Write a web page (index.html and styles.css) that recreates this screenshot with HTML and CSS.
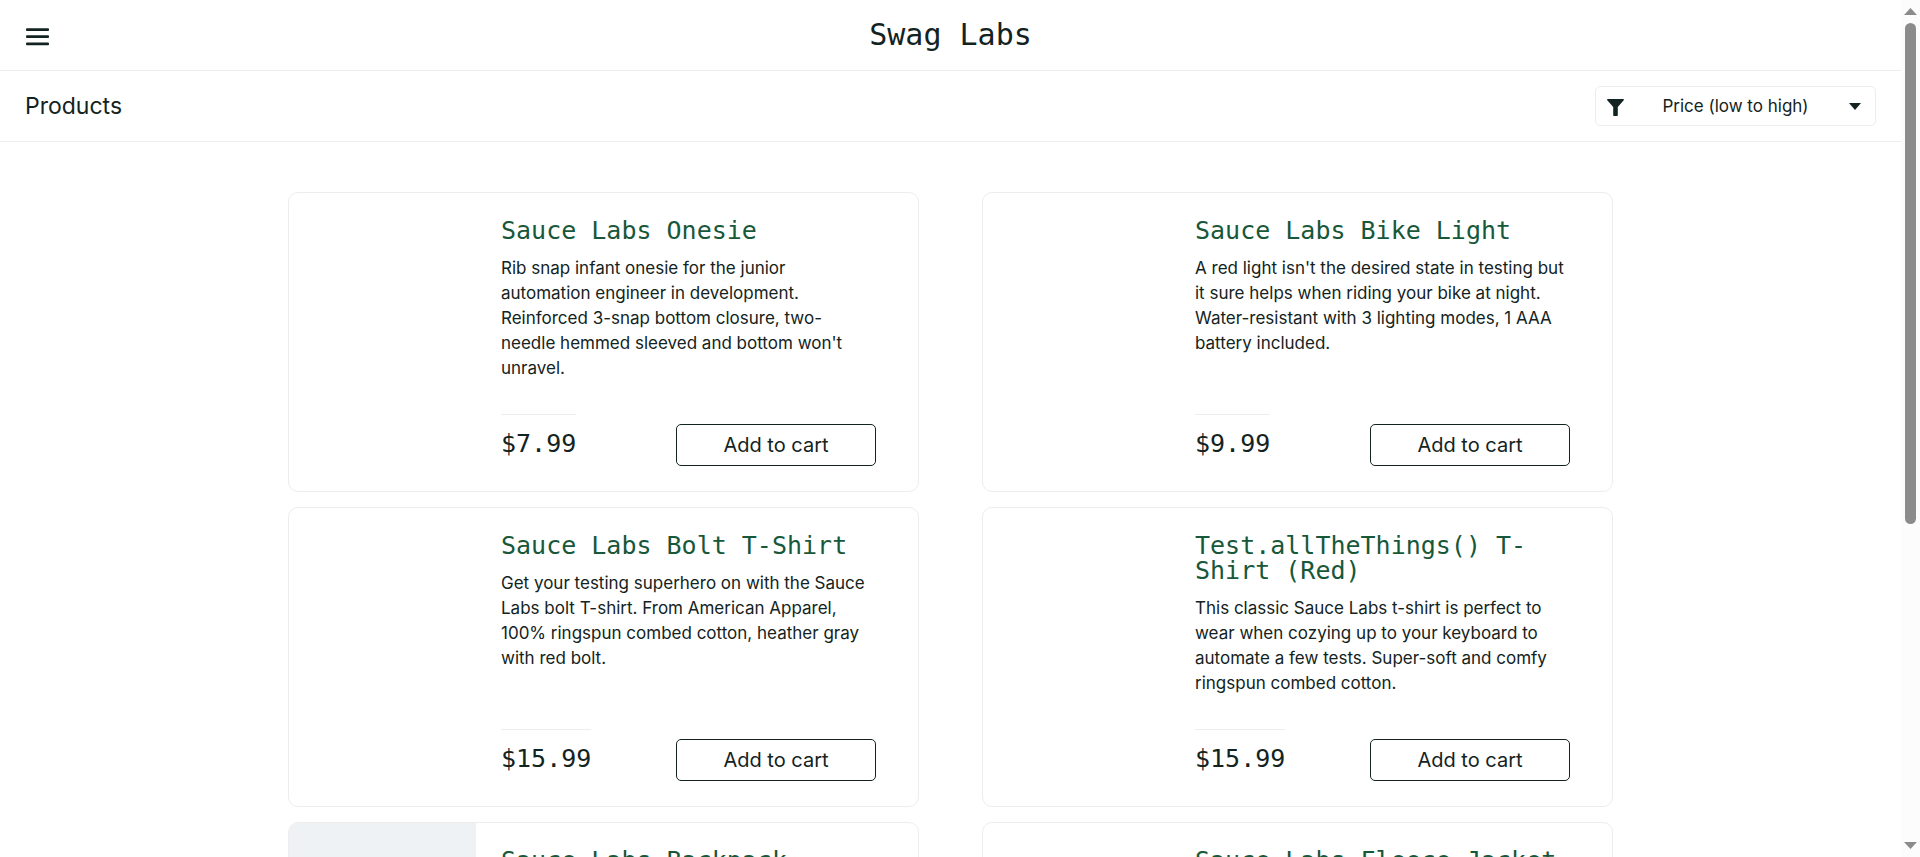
FILE: index.html
```html
<!DOCTYPE html>
<html lang="en">
<head>
<meta charset="utf-8">
<title>Swag Labs</title>
<meta name="viewport" content="width=device-width, initial-scale=1">
<link rel="stylesheet" href="styles.css">
</head>
<body>
<div class="page">
  <header class="header">
    <button class="menu-button" type="button" aria-label="Open menu">
      <svg viewBox="0 0 24 18" width="24" height="18" aria-hidden="true"><g fill="#132322"><rect x="1" y="0.3" width="23" height="2.7" rx="1"/><rect x="1" y="7.3" width="23" height="2.7" rx="1"/><rect x="1" y="14.5" width="23" height="2.7" rx="1"/></g></svg>
    </button>
    <div class="logo">Swag Labs</div>
  </header>
  <div class="toolbar">
    <h1 class="toolbar-title">Products</h1>
    <div class="sort">
      <svg class="sort-filter" viewBox="0 0 17 17" width="17" height="17" aria-hidden="true"><path fill="#132322" d="M.8 0h15.4c.8 0 1 .8.5 1.300L10.800 8v8.200c0 .5-.3.800-.8.800H7c-.5 0-.8-.3-.8-.8V8L.3 1.300C-.2.8 0 0 .8 0z"/></svg>
      <select class="sort-select" aria-label="Sort products">
        <option>Name (A to Z)</option>
        <option>Name (Z to A)</option>
        <option selected>Price (low to high)</option>
        <option>Price (high to low)</option>
      </select>
      <svg class="sort-caret" viewBox="0 0 12 7" width="12" height="7" aria-hidden="true"><path fill="#132322" d="M0 0h12L6 7z"/></svg>
    </div>
  </div>
  <main class="products">
    <article class="card">
      <div class="card-image"></div>
      <div class="card-body">
        <div><a class="card-name" href="#onesie">Sauce Labs Onesie</a>
        <p class="card-text">Rib snap infant onesie for the junior automation engineer in development. Reinforced 3-snap bottom closure, two-needle hemmed sleeved and bottom won't unravel.</p></div>
        <div class="card-footer"><div class="price">$7.99</div><button class="add" type="button">Add to cart</button></div>
      </div>
    </article>
    <article class="card">
      <div class="card-image"></div>
      <div class="card-body">
        <div><a class="card-name" href="#bike-light">Sauce Labs Bike Light</a>
        <p class="card-text">A red light isn't the desired state in testing but it sure helps when riding your bike at night. Water-resistant with 3 lighting modes, 1 AAA battery included.</p></div>
        <div class="card-footer"><div class="price">$9.99</div><button class="add" type="button">Add to cart</button></div>
      </div>
    </article>
    <article class="card">
      <div class="card-image"></div>
      <div class="card-body">
        <div><a class="card-name" href="#bolt">Sauce Labs Bolt T-Shirt</a>
        <p class="card-text">Get your testing superhero on with the Sauce Labs bolt T-shirt. From American Apparel, 100% ringspun combed cotton, heather gray with red bolt.</p></div>
        <div class="card-footer"><div class="price">$15.99</div><button class="add" type="button">Add to cart</button></div>
      </div>
    </article>
    <article class="card">
      <div class="card-image"></div>
      <div class="card-body">
        <div><a class="card-name" href="#red">Test.allTheThings() T-Shirt (Red)</a>
        <p class="card-text">This classic Sauce Labs t-shirt is perfect to wear when cozying up to your keyboard to automate a few tests. Super-soft and comfy ringspun combed cotton.</p></div>
        <div class="card-footer"><div class="price">$15.99</div><button class="add" type="button">Add to cart</button></div>
      </div>
    </article>
    <article class="card">
      <div class="card-image card-image-loaded"></div>
      <div class="card-body">
        <div><a class="card-name" href="#backpack">Sauce Labs Backpack</a></div>
      </div>
    </article>
    <article class="card">
      <div class="card-image"></div>
      <div class="card-body">
        <div><a class="card-name" href="#jacket">Sauce Labs Fleece Jacket</a></div>
      </div>
    </article>
  </main>
</div>
<div class="scrollbar" aria-hidden="true">
  <svg viewBox="0 0 13 7" width="13" height="7"><path fill="#8b8b8b" d="M0 7h13L6.500 0z"/></svg>
  <div class="scroll-track"><div class="scroll-thumb"></div></div>
  <svg viewBox="0 0 13 7" width="13" height="7"><path fill="#8b8b8b" d="M0 0h13L6.500 7z"/></svg>
</div>
</body>
</html>
```
FILE: styles.css
```css
* { box-sizing: border-box; }

body {
  display: flex;
  height: 100vh;
  margin: 0;
  overflow: hidden;
  background: #fff;
  color: #132322;
  font-family: "Inter", "Open Sans", sans-serif;
}

.page { flex: 1; min-width: 0; overflow: hidden; }

.header {
  display: grid;
  grid-template-columns: 1fr auto 1fr;
  align-items: center;
  height: 71px;
  padding: 0 25px;
  border-bottom: 1px solid #ededed;
}

.menu-button {
  justify-self: start;
  padding: 3px 0 0;
  border: 0;
  background: none;
  line-height: 0;
}

.logo {
  grid-column: 2;
  font-family: "DejaVu Sans Mono", monospace;
  font-size: 30px;
  line-height: 40px;
}

.toolbar {
  display: flex;
  align-items: center;
  justify-content: space-between;
  height: 71px;
  padding: 0 25px;
  border-bottom: 1px solid #ededed;
}

.toolbar-title { margin: 0; font-size: 23px; font-weight: 400; line-height: 30px; }

.sort { position: relative; width: 281px; }

.sort-select {
  display: block;
  width: 100%;
  height: 40px;
  padding: 0;
  appearance: none;
  border: 1px solid #ededed;
  border-radius: 5px;
  background: #fff;
  color: inherit;
  font-family: inherit;
  font-size: 17px;
  text-align: center;
  text-align-last: center;
}

.sort-filter { position: absolute; top: 13px; left: 12px; }
.sort-caret { position: absolute; top: 17px; right: 15px; }

.products {
  display: grid;
  grid-template-columns: 1fr 1fr;
  gap: 15px 63px;
  max-width: 1325px;
  margin: 0 auto;
  padding-top: 50px;
}

.card {
  display: flex;
  min-height: 300px;
  overflow: hidden;
  border: 1px solid #ededed;
  border-radius: 10px;
}

.card-image { flex: none; width: 187px; }
.card-image-loaded { background: #eef2f5; }

.card-body {
  display: flex;
  flex: 1;
  flex-direction: column;
  justify-content: space-between;
  padding: 25px 42px 25px 25px;
}

.card-name {
  display: block;
  color: #18583a;
  font-family: "DejaVu Sans Mono", monospace;
  font-size: 25px;
  line-height: 25px;
  text-decoration: none;
}

.card-text { margin: 13px 0 0; font-size: 17px; line-height: 25px; }

.card-footer { display: flex; align-items: flex-end; justify-content: space-between; }

.price {
  height: 52px;
  padding-top: 16px;
  border-top: 1px solid #ededed;
  font-family: "DejaVu Sans Mono", monospace;
  font-size: 25px;
  line-height: 25px;
}

.add {
  width: 200px;
  height: 42px;
  padding: 0;
  border: 1px solid #132322;
  border-radius: 5px;
  background: #fff;
  color: inherit;
  font-family: inherit;
  font-size: 20px;
  font-weight: 400;
}

.scrollbar {
  display: flex;
  flex: none;
  flex-direction: column;
  align-items: center;
  gap: 8px;
  width: 19px;
  padding: 8px 0;
  background: #fcfcfc;
}

.scroll-track { flex: 1; width: 11px; }
.scroll-thumb { height: 501px; border-radius: 6px; background: #8b8b8b; }
```
